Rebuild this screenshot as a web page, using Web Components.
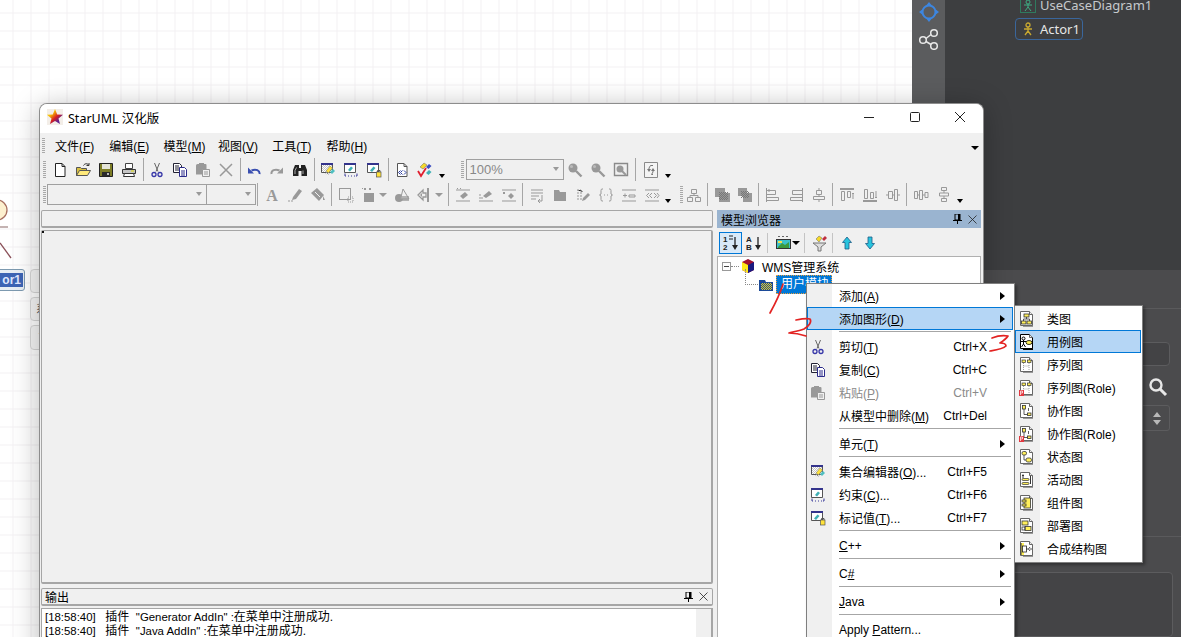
<!DOCTYPE html>
<html lang="zh"><head><meta charset="utf-8"><title>StarUML</title>
<style>
html,body{margin:0;padding:0;width:1181px;height:637px;overflow:hidden;font:12px "Liberation Sans","Noto Sans CJK SC",sans-serif;color:#000}
u{text-underline-offset:1px}
.lat{font-size:11.4px}
</style></head><body>
<x-desktop>
  <x-canvas slot="canvas">
    <x-actor-bit></x-actor-bit>
  </x-canvas>
  <x-sidepanel slot="side"></x-sidepanel>

  <x-window slot="window">
    <x-titlebar>StarUML 汉化版</x-titlebar>
    <x-menubar>
      <span>文件(<u>F</u>)</span><span>编辑(<u>E</u>)</span><span>模型(<u>M</u>)</span><span>视图(<u>V</u>)</span><span>工具(<u>T</u>)</span><span>帮助(<u>H</u>)</span>
    </x-menubar>
    <x-toolbar style="--pl:3px">
      <x-grip></x-grip>
      <x-tool icon="new"></x-tool><x-tool icon="open"></x-tool><x-tool icon="save"></x-tool><x-tool icon="print"></x-tool><x-sep></x-sep>
      <x-tool icon="cut"></x-tool><x-tool icon="copy"></x-tool><x-tool icon="paste"></x-tool><x-tool icon="del"></x-tool><x-sep></x-sep>
      <x-tool icon="undo"></x-tool><x-tool icon="redo"></x-tool><x-tool icon="find"></x-tool><x-sep></x-sep>
      <x-tool icon="coll"></x-tool><x-tool icon="cons"></x-tool><x-tool icon="tag"></x-tool><x-sep></x-sep>
      <x-tool icon="xml"></x-tool><x-tool icon="check"></x-tool><x-caret></x-caret>
      <x-grip style="margin:0 2px 0 12px"></x-grip>
      <x-combo style="width:98px" text="100%"></x-combo>
      <x-tool icon="zin"></x-tool><x-tool icon="zout"></x-tool><x-tool icon="zfit"></x-tool><x-sep></x-sep>
      <x-tool icon="refresh" style="margin-left:2px"></x-tool><x-caret></x-caret>
    </x-toolbar>
    <x-toolbar style="--pl:3px">
      <x-grip style="margin-right:.5px"></x-grip>
      <x-combo style="width:160px"></x-combo><x-combo style="width:50px;margin-left:-1px"></x-combo><x-sep style="width:4.5px"></x-sep>
      <x-tool icon="fA"></x-tool><x-tool icon="pen"></x-tool><x-tool icon="fill"></x-tool><x-sep></x-sep>
      <x-tool icon="sel"></x-tool><x-tool icon="stereo" caret></x-tool><x-tool icon="shapes"></x-tool><x-tool icon="line" caret></x-tool><x-sep></x-sep>
      <x-tool icon="n1"></x-tool><x-tool icon="n2"></x-tool><x-tool icon="n3"></x-tool><x-sep></x-sep>
      <x-tool icon="note"></x-tool><x-tool icon="folder"></x-tool><x-tool icon="sig"></x-tool><x-tool icon="brace"></x-tool><x-tool icon="attr"></x-tool><x-tool icon="op"></x-tool><x-caret></x-caret>
      <x-grip style="margin:0 -1px 0 5px"></x-grip>
      <x-tool icon="hier"></x-tool><x-sep></x-sep>
      <x-tool icon="front"></x-tool><x-tool icon="back"></x-tool><x-sep></x-sep>
      <x-tool icon="al"></x-tool><x-tool icon="ar"></x-tool><x-tool icon="ac"></x-tool><x-sep></x-sep>
      <x-tool icon="at"></x-tool><x-tool icon="ab"></x-tool><x-tool icon="am"></x-tool><x-sep></x-sep>
      <x-tool icon="sh"></x-tool><x-tool icon="sv"></x-tool><x-caret></x-caret>
    </x-toolbar>
    <x-workspace>
      <x-dock-bar slot="tabs"></x-dock-bar>
      <x-doc-area slot="doc"></x-doc-area>
      <x-dock-bar slot="outbar" title="输出" closable></x-dock-bar>
      <x-log slot="log">
        <div><span class="lat">[18:58:40]   </span>插件  <span class="lat">"Generator AddIn" :</span>在菜单中注册成功.</div>
        <div><span class="lat">[18:58:40]   </span>插件  <span class="lat">"Java AddIn" :</span>在菜单中注册成功.</div>
        <div><span class="lat">[18:58:40]   </span>插件  <span class="lat">"C++ AddIn" :</span>在菜单中注册成功.</div>
      </x-log>
      <x-dock-bar slot="browserbar" title="模型浏览器" closable active></x-dock-bar>
      <x-browser-tools slot="browsertools"></x-browser-tools>
      <x-tree slot="tree"></x-tree>
    </x-workspace>
  </x-window>

  <x-menu slot="overlay" style="left:806px;top:283px;width:209px;height:360px;--ipad:3px">
    <x-menu-item arrow>添加(<u>A</u>)</x-menu-item>
    <x-menu-item arrow active>添加图形(<u>D</u>)</x-menu-item>
    <x-menu-sep></x-menu-sep>
    <x-menu-item icon="cut" shortcut="Ctrl+X">剪切(<u>T</u>)</x-menu-item>
    <x-menu-item icon="copy" shortcut="Ctrl+C">复制(<u>C</u>)</x-menu-item>
    <x-menu-item icon="paste" shortcut="Ctrl+V" disabled>粘贴(<u>P</u>)</x-menu-item>
    <x-menu-item shortcut="Ctrl+Del">从模型中删除(<u>M</u>)</x-menu-item>
    <x-menu-sep></x-menu-sep>
    <x-menu-item arrow>单元(<u>T</u>)</x-menu-item>
    <x-menu-sep></x-menu-sep>
    <x-menu-item icon="coll" shortcut="Ctrl+F5">集合编辑器(<u>O</u>)...</x-menu-item>
    <x-menu-item icon="cons" shortcut="Ctrl+F6">约束(<u>C</u>)...</x-menu-item>
    <x-menu-item icon="tag" shortcut="Ctrl+F7">标记值(<u>T</u>)...</x-menu-item>
    <x-menu-sep></x-menu-sep>
    <x-menu-item arrow><u>C</u>++</x-menu-item>
    <x-menu-sep></x-menu-sep>
    <x-menu-item arrow>C<u>#</u></x-menu-item>
    <x-menu-sep></x-menu-sep>
    <x-menu-item arrow><u>J</u>ava</x-menu-item>
    <x-menu-sep></x-menu-sep>
    <x-menu-item>Apply <u>P</u>attern...</x-menu-item>
  </x-menu>

  <x-menu slot="overlay" sub style="left:1014px;top:305px;width:129px;--ipad:1px">
    <x-menu-item icon="dclass">类图</x-menu-item>
    <x-menu-item icon="duse" active>用例图</x-menu-item>
    <x-menu-item icon="dseq">序列图</x-menu-item>
    <x-menu-item icon="dseqr">序列图(Role)</x-menu-item>
    <x-menu-item icon="dcol">协作图</x-menu-item>
    <x-menu-item icon="dcolr">协作图(Role)</x-menu-item>
    <x-menu-item icon="dstate">状态图</x-menu-item>
    <x-menu-item icon="dact">活动图</x-menu-item>
    <x-menu-item icon="dcomp">组件图</x-menu-item>
    <x-menu-item icon="ddep">部署图</x-menu-item>
    <x-menu-item icon="dstruct">合成结构图</x-menu-item>
  </x-menu>

  <x-scribble slot="overlay"></x-scribble>
</x-desktop>

<script>
const G='#999';
const win=(extra)=>`<defs><pattern id="d" width="2" height="2" patternUnits="userSpaceOnUse"><rect width="1" height="1" fill="#888"/><rect x="1" y="1" width="1" height="1" fill="#888"/></pattern></defs><path d="M1.5 1.5h11v9h-11z" fill="#fff" stroke="#555"/><rect x="1" y="1" width="12" height="2" fill="#34348c"/>${extra}`;
const page=(inner,active)=>`<path d="M3 2h10v13H3z" fill="${active?'#000':'#999'}" transform="translate(1 1)"/><path d="M1.5 .5h9l3 3v11h-12z" fill="#fff" stroke="${active?'#000':'#666'}"/><path d="M10.5 .5v3h3" fill="#eee" stroke="#666"/>${inner}`;
const Y='#ffef5a',B='#333';
const ICONS={
 new:`<path d="M3.5 1.5h6.5l3 3v10h-9.5z" fill="#fff" stroke="#222"/><path d="M10 1.5v3h3" fill="none" stroke="#222"/>`,
 open:`<path d="M1.5 13.5v-8h4l1 1h5v7z" fill="#d8c040" stroke="#555"/><path d="M1.5 13.5l3-5h11l-3 5z" fill="#ffe97a" stroke="#555"/><path d="M8.5 3.5c1-2 4-2.5 5-.5m.5-2v2.5h-2.5" stroke="#333" fill="none"/>`,
 save:`<path d="M1.5 1.5h13v13h-13z" fill="#7d7d26" stroke="#222"/><rect x="4" y="2" width="8" height="5" fill="#e4e4d8"/><rect x="4" y="10" width="8" height="4" fill="#2a2a2a"/><rect x="9" y="11" width="2" height="2" fill="#bbb"/>`,
 print:`<path d="M4.5 1.5h7v5h-7z" fill="#fff" stroke="#444"/><path d="M1.5 7.5h13v4h-13z" fill="#c4c4c4" stroke="#333"/><path d="M3.5 11.5h9l1 3h-11z" fill="#fff" stroke="#333"/><path d="M10 9h3" stroke="#dd0"/>`,
 cut:`<path d="M5.5 1l3.5 8.5M10.5 1L7 9.5" stroke="#666" fill="none"/><circle cx="5" cy="12.5" r="2" fill="none" stroke="#3737a8" stroke-width="1.3"/><circle cx="11" cy="12.5" r="2" fill="none" stroke="#3737a8" stroke-width="1.3"/>`,
 copy:`<path d="M1.5 1.5h6l2 2v7h-8z" fill="#fff" stroke="#223"/><path d="M3 4h4M3 6h4M3 8h4" stroke="#223"/><path d="M7.5 5.5h5l2 2v7h-7z" fill="#fff" stroke="#2a2a8a"/><path d="M9 9h4M9 11h4M9 13h4" stroke="#2a2a8a"/>`,
 paste:`<path d="M1 3.5a1.5 1.5 0 0 1 1.5-1.5h1.500v-1h5v1h1.500a1 1 0 0 1 1 1v9.500H1z" fill="${G}"/><path d="M7.500 7.500h7v7h-7z" fill="#f0f0f0" stroke="${G}"/><path d="M9 10h4M9 12h4" stroke="${G}"/>`,
 del:`<path d="M2 2l12 12M14 2L2 14" stroke="${G}" stroke-width="1.500"/>`,
 undo:`<path d="M13.500 12c.5-3.500-3.500-5.500-8-3.500" fill="none" stroke="#3a4fb0" stroke-width="2"/><path d="M2 5.500v6h6z" fill="#3a4fb0"/>`,
 redo:`<path d="M2.500 12c-.5-3.500 3.500-5.500 8-3.500" fill="none" stroke="${G}" stroke-width="2"/><path d="M14 5.500v6h-6z" fill="${G}"/>`,
 find:`<path d="M1 14V8l2-5h4v3h2V3h4l2 5v6H9.500V9h-3v5z" fill="#222"/><path d="M3 12V8.500l1.500-3M11 12V8.500" stroke="#aaa" fill="none"/>`,
 coll:win(`<rect x="2" y="3" width="10" height="7" fill="url(#d)" opacity=".5"/><path d="M5 11l5-6 3 2-5 6z" fill="url(#d)"/><path d="M6 9l4-5 2.500 2-4 5z" fill="#ffe23a" stroke="#777" stroke-width=".5"/><path d="M10 10l3-3 2 2-3 3z" fill="#4fbfc0"/>`),
 cons:win(`<path d="M5 8l3-3.500 2 1.500-3 3.500z" fill="#3fb0b5"/><path d="M2 11.500v2.500h1M14 11.500v2.500h-1M5 14h1M8 14h1M11 14h1" stroke="#3a3a9a" fill="none"/>`),
 tag:win(`<path d="M4 8.500l3.500-4 2 1.500-3.500 4z" fill="#3fb0b5"/><rect x="10.500" y="10" width="4.500" height="5" fill="#ffe23a" stroke="#555" stroke-width=".7"/><path d="M11.500 10V8.500h2.500V10" fill="none" stroke="#555"/>`),
 xml:`<path d="M3.500 1.500h6.500l3 3v10h-9.500z" fill="#fff" stroke="#555"/><path d="M10 1.500v3h3" fill="none" stroke="#555"/><path d="M6.500 8.500l-2 2 2 2M8.500 8.500l-2 2 2 2M10 8.500l2 2-2 2" fill="none" stroke="#2a3ea0"/>`,
 check:`<path d="M7 1l3 2-4 4-3-2z" fill="#f5d828" stroke="#666" stroke-width=".5"/><path d="M12 2l2.500 2-3 3-2.500-2z" fill="#3b4cc0"/><path d="M12 8l2.500 2-3 3-2.500-2z" fill="#3fb0b5"/><path d="M1 9l3 5 5-8" fill="none" stroke="#e02030" stroke-width="1.800"/>`,
 zin:`<circle cx="6" cy="6" r="4.500" fill="${G}"/><circle cx="4.500" cy="4.500" r="1.500" fill="#bbb"/><path d="M9 9l5.500 5.500" stroke="${G}" stroke-width="2.400"/>`,
 zout:`<circle cx="6" cy="6" r="4.500" fill="${G}"/><circle cx="4.500" cy="4.500" r="1.500" fill="#bbb"/><path d="M9 9l5.500 5.500" stroke="${G}" stroke-width="2.400"/>`,
 zfit:`<path d="M1.500 1.500h13v12h-13z" fill="#f0f0f0" stroke="#8a8a8a" stroke-width="1.400"/><circle cx="7" cy="7" r="3.500" fill="${G}"/><path d="M9 9l4 4" stroke="${G}" stroke-width="2"/>`,
 refresh:`<path d="M1.500 .5h13v15h-13z" fill="#f4f4f4" stroke="#8a8a8a"/><path d="M10 3.500H7.500L6 6v2M10 12.500h-1.500L10 10V8" fill="none" stroke="#777"/><path d="M4 7h4L6 10zM8 9h4l-2-3z" fill="#777"/>`,
 fA:`<text x="8" y="14" text-anchor="middle" font-family="Liberation Serif,serif" font-weight="700" font-size="16" fill="${G}">A</text>`,
 pen:`<path d="M6 10l6-8 3 2-6 8-4 1z" fill="${G}"/><path d="M1 14h6" stroke="${G}" stroke-dasharray="2 1"/>`,
 fill:`<path d="M1 6l6-5 7 7-5 6z" fill="${G}"/><path d="M5 5l5 5" stroke="#f0f0f0"/><path d="M13 9l2 4h-2z" fill="${G}"/>`,
 sel:`<rect x="1.500" y="1.500" width="11" height="11" fill="none" stroke="${G}"/><path d="M10 10h5v5h-5z" fill="none" stroke="${G}" stroke-dasharray="1 1"/>`,
 stereo:`<path d="M3 1l2 2M5 1L3 3M8 1l2 2M10 1L8 3M1 1l1 1" stroke="${G}"/><rect x="3" y="6" width="10" height="9" fill="${G}"/>`,
 shapes:`<circle cx="5" cy="11" r="4" fill="${G}"/><path d="M9 2l6 10H6.500z" fill="#f0f0f0" stroke="${G}"/><rect x="7" y="9" width="8" height="5" fill="${G}" opacity=".7"/>`,
 line:`<path d="M11 1v14" stroke="${G}" stroke-width="2"/><path d="M1 8l5-5v3h3v4H6v3z" fill="none" stroke="${G}" stroke-width="1.300"/><path d="M3 8l2-2v4z" fill="${G}"/>`,
 n1:`<path d="M1 3h14M1 14h14" stroke="${G}"/><path d="M2 1l1 1M3 1L2 2M5 1l1 1M6 1L5 2" stroke="${G}"/><path d="M5 9l5-4 3 3-5 4z" fill="${G}"/>`,
 n2:`<path d="M1 14h14M1 11h4M1 8h2" stroke="${G}"/><path d="M5 9l6-5 3 3-6 4z" fill="${G}"/>`,
 n3:`<path d="M1 3h14M1 14h14" stroke="${G}"/><path d="M2 5l2 2M4 5L2 7" stroke="${G}"/><path d="M7 9l3-3 3 3-3 3z" fill="${G}"/>`,
 note:`<path d="M2 3h12M2 6h12M2 9h8M2 12h5" stroke="${G}"/><path d="M13 8v6H9m2-2l-2 2 2 2" fill="none" stroke="${G}"/>`,
 folder:`<path d="M2 3h5l1 2h6v9H2z" fill="${G}"/>`,
 sig:`<path d="M2 3h4l2 2M2 6h6M2 9h5M2 12h6" stroke="${G}" stroke-dasharray="2 1"/><path d="M8 11l5-5 2 2-5 5-3 1z" fill="${G}"/>`,
 brace:`<path d="M5 2H4Q3 2 3 3.500V7L1.500 8 3 9v3.500Q3 14 4 14h1M11 2h1q1 0 1 1.500V7l1.500 1L13 9v3.500q0 1.500-1 1.500h-1" fill="none" stroke="${G}"/><path d="M6 8h1M9 8h1" stroke="${G}"/>`,
 attr:`<path d="M1 3h14M1 14h14" stroke="${G}"/><path d="M2 8.500h4M4 6.500v4M8 8h6v2H8z" stroke="${G}" fill="none"/>`,
 op:`<path d="M1 3h14M1 14h14" stroke="${G}"/><path d="M5 6L2.500 8.500 5 11M8 6L5.500 8.500 8 11M10 6l2.500 2.500L10 11M13 6l2 2.500-2 2.500" stroke="${G}" fill="none"/>`,
 hier:`<path d="M5.500 2.500h5v4h-5zM1.500 10.500h5v4h-5zM9.500 10.500h5v4h-5z" fill="none" stroke="${G}"/><path d="M8 6.500v2M4 10.500v-2h8v2" fill="none" stroke="${G}"/>`,
 front:`<defs><pattern id="d" width="2" height="2" patternUnits="userSpaceOnUse"><rect width="1" height="1" fill="#777"/><rect x="1" y="1" width="1" height="1" fill="#777"/></pattern></defs><rect x="5" y="6" width="11" height="9" fill="${G}"/><rect x="1" y="1" width="10" height="9" fill="${G}"/><rect x="5" y="5" width="9" height="8" fill="url(#d)"/>`,
 back:`<defs><pattern id="d" width="2" height="2" patternUnits="userSpaceOnUse"><rect width="1" height="1" fill="#777"/><rect x="1" y="1" width="1" height="1" fill="#777"/></pattern></defs><rect x="1" y="1" width="9" height="8" fill="${G}"/><rect x="6" y="6" width="9" height="9" fill="${G}"/><rect x="4" y="4" width="8" height="7" fill="url(#d)"/>`,
 al:`<path d="M1.500 1v14" stroke="${G}"/><path d="M1.500 3.500h9v4h-9M1.500 10.500h12v3h-12M4 2v3" fill="none" stroke="${G}"/>`,
 ar:`<path d="M14.500 1v14" stroke="${G}"/><path d="M14.500 3.500h-10v4h10M14.500 10.500h-12v3h12" fill="none" stroke="${G}"/>`,
 ac:`<path d="M8 1v14" stroke="${G}"/><path d="M5.500 3.500h5v4h-5zM2.500 9.500h11v3h-11z" fill="#f0f0f0" stroke="${G}"/>`,
 at:`<path d="M1 2h14" stroke="${G}" stroke-width="2"/><path d="M2.500 4.500h3v9h-3zM8.500 4.500h3v6h-3zM14 12V6m-1 1l1-1 1 1" fill="none" stroke="${G}"/>`,
 ab:`<path d="M1 14h14" stroke="${G}" stroke-width="2"/><path d="M2.500 2.500h3v9h-3zM8.500 5.500h3v6h-3zM14 4v7m-1-1l1 1 1-1" fill="none" stroke="${G}"/>`,
 am:`<path d="M1 8h14" stroke="${G}"/><path d="M3.500 4.500h4v7h-4zM9.500 2.500h3v11h-3z" fill="#f0f0f0" stroke="${G}"/>`,
 sh:`<path d="M1.500 4.500h3v7h-3zM6.500 3.500h3v9h-3zM12 5.500h3v5h-3zM4.500 8h2M9.500 8h2.500" fill="#f0f0f0" stroke="${G}"/>`,
 sv:`<path d="M5.500 .5h5v3h-5zM3.500 6h9v3h-9zM5.500 11.500h5v3h-5zM8 3.500V6M8 9v2.500" fill="#f0f0f0" stroke="${G}"/>`,
 sort12:`<text x="0" y="7" font-family="Liberation Sans" font-weight="700" font-size="8" fill="#222">1</text><text x="0" y="15" font-family="Liberation Sans" font-weight="700" font-size="8" fill="#222">2</text><path d="M6 1h4M6 4h4" stroke="#222"/><path d="M12 2v11" stroke="#222" stroke-width="1.300"/><path d="M9 10h6l-3 5z" fill="#222"/>`,
 sortab:`<text x="0" y="7" font-family="Liberation Sans" font-weight="700" font-size="8" fill="#222">A</text><text x="0" y="15" font-family="Liberation Sans" font-weight="700" font-size="8" fill="#222">B</text><path d="M12 2v11" stroke="#222" stroke-width="1.300"/><path d="M9 10h6l-3 5z" fill="#222"/>`,
 filt:`<path d="M3 1l1 1M5 1L4 2M7 1l1 1M9 1L8 2M11 1l1 1M13 1l-1 1" stroke="#666"/><rect x="1.500" y="4.500" width="14" height="9" fill="#3cc0c8" stroke="#333"/><path d="M3 12l4-4 3 2 4-3v6H3z" fill="#3c9a3c"/><rect x="3" y="6" width="4" height="2" fill="#f5e050"/>`,
 funnel:`<path d="M1 8h13l-5 4v4H6v-4z" fill="#ddd" stroke="#777"/><path d="M4 4l3-3 3 2-3 4z" fill="#f5d828" stroke="#666" stroke-width=".5"/><path d="M10 4l3-3 2 2-3 3z" fill="#c03040"/>`,
 up:`<path d="M8 2l4.500 5.500H10V14H6V7.500H3.500z" fill="#28c4de" stroke="#1c5a86" stroke-width=".8"/>`,
 down:`<path d="M8 14l4.500-5.500H10V2H6v6.500H3.500z" fill="#28c4de" stroke="#1c5a86" stroke-width=".8"/>`,
 cube:`<path d="M8 1l6 3v8l-6 3-6-3V4z" fill="#a01030"/><path d="M2 4l6 3v8l-6-3z" fill="#ffe818"/><path d="M14 4L8 7v8l6-3z" fill="#1a1a80"/>`,
 pkg:`<defs><pattern id="d" width="2" height="2" patternUnits="userSpaceOnUse"><rect width="1" height="1" fill="#e8d020"/><rect x="1" y="1" width="1" height="1" fill="#e8d020"/></pattern></defs><path d="M1 3h6l1 2h7v9H1z" fill="#1c4a98"/><rect x="3" y="6" width="11" height="7" fill="url(#d)"/>`,
 star:`<defs><linearGradient id="s" x1="0" y1="0" x2="1" y2="1"><stop offset=".3" stop-color="#f6c000"/><stop offset=".55" stop-color="#d82020"/><stop offset=".75" stop-color="#602090"/></linearGradient></defs><rect width="16" height="16" fill="#f3eee8"/><path d="M8 0l2.200 5.400 5.800.3-4.500 3.700 1.500 5.600L8 11.900 3 15l1.500-5.600L0 5.700l5.800-.3z" fill="url(#s)"/>`,
 dclass:page(`<rect x="5" y="3" width="5" height="3" fill="${Y}" stroke="${B}" stroke-width=".8"/><rect x="2.500" y="10" width="4.500" height="3" fill="${Y}" stroke="${B}" stroke-width=".8"/><rect x="8" y="10" width="4.500" height="3" fill="${Y}" stroke="${B}" stroke-width=".8"/><path d="M7.500 6v2M4.500 10V8h6v2" fill="none" stroke="${B}" stroke-width=".8"/>`),
 duse:page(`<circle cx="4.500" cy="4.500" r="1.500" fill="none" stroke="#000"/><path d="M4.500 6v4M2 7.500h5M4.500 10L2.500 13M4.500 10l2 3" stroke="#000" fill="none"/><ellipse cx="10" cy="8.500" rx="3" ry="2" fill="${Y}" stroke="#000" stroke-width=".8"/>`,true),
 dseq:page(`<rect x="3" y="3" width="3.500" height="2.500" fill="${Y}" stroke="${B}" stroke-width=".7"/><rect x="8.500" y="3" width="3.500" height="2.500" fill="${Y}" stroke="${B}" stroke-width=".7"/><path d="M4.500 6v7M10 6v7M4.500 9H10" stroke="#888" stroke-width=".8" stroke-dasharray="1 1"/>`),
 dseqr:page(`<rect x="3" y="3" width="3.500" height="2.500" fill="${Y}" stroke="${B}" stroke-width=".7"/><rect x="8.500" y="3" width="3.500" height="2.500" fill="${Y}" stroke="${B}" stroke-width=".7"/><path d="M4.500 6v4M10 6v7M4.500 9H10" stroke="#888" stroke-width=".8" stroke-dasharray="1 1"/><rect x="0" y="10" width="5" height="6" fill="#e03840"/><path d="M1.500 15v-4h2v2h-2" fill="none" stroke="#fff" stroke-width=".7"/>`),
 dcol:page(`<rect x="3.500" y="2.500" width="3" height="3.500" fill="${Y}" stroke="${B}" stroke-width=".8"/><rect x="8.500" y="10" width="3.500" height="2.500" fill="${Y}" stroke="${B}" stroke-width=".8"/><path d="M5 6v5.500h3.500M9.500 5v3" fill="none" stroke="${B}" stroke-width=".8"/>`),
 dcolr:page(`<rect x="3.500" y="2.500" width="3" height="3.500" fill="${Y}" stroke="${B}" stroke-width=".8"/><rect x="8.500" y="10" width="3.500" height="2.500" fill="${Y}" stroke="${B}" stroke-width=".8"/><path d="M5 6v5.500h3.500M9.500 5v3" fill="none" stroke="${B}" stroke-width=".8"/><rect x="0" y="10" width="5" height="6" fill="#e03840"/><path d="M1.500 15v-4h2v2h-2" fill="none" stroke="#fff" stroke-width=".7"/>`),
 dstate:page(`<rect x="3" y="2.500" width="4.500" height="3.500" rx="1.500" fill="${Y}" stroke="${B}" stroke-width=".8"/><rect x="7" y="9" width="5.500" height="4" rx="1.800" fill="${Y}" stroke="${B}" stroke-width=".8"/><path d="M5 6v5h2" fill="none" stroke="${B}" stroke-width=".8"/>`),
 dact:page(`<circle cx="4" cy="3.500" r="1" fill="#222"/><path d="M4 4.500V6" stroke="${B}"/><rect x="3" y="6.500" width="7" height="2" rx="1" fill="${Y}" stroke="${B}" stroke-width=".7"/><rect x="3" y="10.500" width="7" height="2" rx="1" fill="${Y}" stroke="${B}" stroke-width=".7"/><path d="M11.500 4v8" stroke="${B}"/>`),
 dcomp:page(`<rect x="5" y="3" width="6.500" height="10" fill="${Y}" stroke="${B}" stroke-width=".8"/><rect x="3" y="5" width="4" height="2" fill="${Y}" stroke="${B}" stroke-width=".8"/><rect x="3" y="9" width="4" height="2" fill="${Y}" stroke="${B}" stroke-width=".8"/>`),
 ddep:page(`<rect x="3" y="3" width="6" height="4" fill="${Y}" stroke="${B}" stroke-width=".8"/><rect x="6" y="8.500" width="6" height="4" fill="${Y}" stroke="${B}" stroke-width=".8"/><rect x="3" y="9" width="3" height="3" fill="none" stroke="${B}" stroke-width=".8"/>`),
 dstruct:page(`<rect x="2" y="2" width="3" height="12" fill="${Y}"/><path d="M2 2v12" stroke="${B}"/><rect x="3.500" y="5" width="4" height="6" fill="#fff" stroke="#222" stroke-width=".8"/><path d="M7.500 8h2M11 6l-1.500 2 1.500 2M13 8h-2" stroke="#222" fill="none" stroke-width=".8"/>`),
};
function el(name,css,html){
  customElements.define(name,class extends HTMLElement{
    connectedCallback(){
      if(this.shadowRoot)return;
      const s=this.attachShadow({mode:'open'});
      s.innerHTML=`<style>${css}</style>${typeof html==='function'?html(this):html}`;
    }
  });
}
el('x-icon',':host{display:inline-flex;width:16px;height:16px;flex:none}svg{display:block;overflow:visible}',
  h=>`<svg viewBox="0 0 16 16" width="16" height="16" aria-hidden="true">${ICONS[h.getAttribute('name')]||''}</svg>`);

el('x-desktop',`:host{display:block;position:relative;width:1181px;height:637px;overflow:hidden}
  .base{display:flex;height:100%}
  .l{flex:1;min-width:0;display:flex}.r{width:269px;display:flex}`,
  `<div class="base"><div class="l"><slot name="canvas"></slot></div><div class="r"><slot name="side"></slot></div></div><slot name="window"></slot><slot name="overlay"></slot>`);

el('x-canvas',`:host{display:block;flex:1;position:relative;overflow:hidden;background-color:#fff;
  background-image:linear-gradient(#f2f0f3 1px,transparent 1px),linear-gradient(90deg,#f2f0f3 1px,transparent 1px);
  background-size:18px 18px;background-position:12.500px 12.500px}`,`<slot></slot>`);

el('x-actor-bit',`:host{display:block;position:absolute;left:0;top:195px;width:40px;height:160px}
  svg{position:absolute;left:0;top:0}
  .label{position:absolute;left:-6px;top:74px;width:29px;height:20px;border:1px solid #7d9ab0;border-radius:3px;background:#e8eef3;display:flex;align-items:center;box-sizing:content-box;
    font:700 12px "Liberation Sans",sans-serif}
  .label span{background:#3d64b4;color:#dfe6ff;padding:0 2px 0 6px;line-height:14px;width:20px;text-align:right}
  .chip{position:absolute;left:30px;width:14px;box-sizing:border-box;border:1px solid #d6d6d6;border-radius:4px;background:#f6f6f6;overflow:hidden;font:11px "Noto Sans","Noto Sans CJK SC",sans-serif;color:#555;padding-left:5px}`,
  `<svg width="40" height="70" aria-hidden="true"><circle cx="-3" cy="15" r="10" fill="#fdf0cf" stroke="#a87060" stroke-width="1.300"/><path d="M0 32h8" stroke="#b09a98" stroke-width="1.500"/><path d="M0 48l11 15" stroke="#8a5058" stroke-width="1.300"/></svg>
   <div class="label"><span>or1</span></div>
   <div class="chip" style="top:74px;height:24px"></div>
   <div class="chip" style="top:102px;height:24px;line-height:22px">系</div>
   <div class="chip" style="top:130px;height:25px;line-height:20px">丶</div>`);

el('x-sidepanel',`:host{display:flex;flex:1;font-family:"Noto Sans",sans-serif;color:#d8d8da}
  .rail{width:33px;background:#5b5c5e;display:flex;flex-direction:column;align-items:center;padding-top:1px;gap:5px;height:270px;box-sizing:border-box}
  .main{flex:1;display:flex;flex-direction:column;background:#4b4b4d;min-width:0}
  .top{height:270px;background:#3d3e40;position:relative;flex:1}
  .row{position:absolute;left:75px;top:-3px;display:flex;align-items:center;gap:4px;font-size:13px;line-height:16px;color:#c6c9cc}
  .chip{position:absolute;left:70px;top:18px;height:22px;width:68px;box-sizing:border-box;border:1px solid #3a669c;border-radius:4px;display:flex;align-items:center;gap:6px;padding-left:6px;font-size:13px;color:#e6e6e6}
  .bx{width:16px;height:16px;border:1px solid #2f7a5e;box-sizing:border-box;display:flex}
  .form{flex:1;position:relative}
  .l1{position:absolute;left:0;right:0;top:38px;border-top:1px solid #5a5a5c}
  .inp{position:absolute;right:11px;top:72px;width:60px;height:24px;box-sizing:border-box;border:1px solid #5c5c5e;border-radius:4px;background:#434345}
  .sel{position:absolute;right:11px;top:135px;width:60px;height:26px;box-sizing:border-box;border:1px solid #5c5c5e;border-radius:3px}
  .sel svg{position:absolute;right:3px;top:3px}
  .srch{position:absolute;right:12px;top:106px}
  .l2{position:absolute;left:0;right:0;top:266px;border-top:1px solid #5a5a5c}
  .box{position:absolute;left:0;right:8px;top:302px;bottom:0;border:1px solid #5c5c5e;border-radius:4px;background:#444446}`,
  `<div style="flex:1;flex-direction:column;display:flex"><div style="display:flex;height:270px">
     <div class="rail">
      <svg width="22" height="22" viewBox="0 0 22 22" aria-hidden="true"><circle cx="11" cy="11" r="6.500" fill="none" stroke="#3d86e0" stroke-width="2"/><path d="M11 1l2.600 3.200h-5.200zM11 21l2.600-3.200h-5.200zM1 11l3.200-2.600v5.200zM21 11l-3.200-2.600v5.200z" fill="#3d86e0"/></svg>
      <svg width="22" height="22" viewBox="0 0 22 22" aria-hidden="true"><g fill="none" stroke="#e8e8e8" stroke-width="1.500"><circle cx="16" cy="5" r="3.300"/><circle cx="5" cy="12" r="3.300"/><circle cx="16" cy="18" r="3.300"/><path d="M8 10.500l5-4M8 13.500l5 3"/></g></svg>
     </div>
     <div class="top">
       <div class="row"><span class="bx"><svg width="14" height="14" viewBox="0 0 14 14" aria-hidden="true"><circle cx="7" cy="4" r="2" fill="none" stroke="#3fae84"/><path d="M7 6v3M3 7h8M7 9l-3 4M7 9l3 4" stroke="#3fae84"/></svg></span>UseCaseDiagram1</div>
       <div class="chip"><svg width="12" height="14" viewBox="0 0 12 14" aria-hidden="true"><circle cx="6" cy="3" r="2" fill="none" stroke="#c8a830" stroke-width="1.300"/><path d="M6 5v4M2 7h8M6 9l-3 4M6 9l3 4" stroke="#c8a830" stroke-width="1.300"/></svg>Actor1</div>
     </div></div>
     <div class="main">
      <div class="form">
       <div class="l1"></div><div class="inp"></div>
       <svg class="srch" width="22" height="22" viewBox="0 0 22 22" aria-hidden="true"><circle cx="9" cy="9" r="5.500" fill="none" stroke="#e8e8e8" stroke-width="2.400"/><path d="M13 13l6 6" stroke="#e8e8e8" stroke-width="3"/></svg>
       <div class="sel"><svg width="18" height="18" viewBox="0 0 18 18" aria-hidden="true"><path d="M9 3l4 5H5zM9 16l4-5H5z" fill="#b8b8b8"/></svg></div>
       <div class="l2"></div><div class="box"></div>
      </div>
     </div></div>`);

el('x-window',`:host{display:flex;flex-direction:column;position:absolute;left:39px;top:103px;width:945px;height:560px;box-sizing:border-box;background:#f0f0f0;
   border:1px solid #8d8d8d;border-bottom:0;border-radius:8px 8px 0 0;box-shadow:0 4px 28px rgba(0,0,0,.28);overflow:hidden}`,`<slot></slot>`);

el('x-titlebar',`:host{display:flex;align-items:center;height:29px;box-sizing:border-box;padding:0 0 3px 7px;background:#fff;flex:none;font:12.500px "Noto Sans","Noto Sans CJK SC",sans-serif}
  .t{flex:1;margin-left:5px}
  .c{display:flex;width:119px;justify-content:space-between;padding-right:18px;box-sizing:border-box;align-items:center;flex:none}
  svg{display:block}`,
  `<x-icon name="star"></x-icon><span class="t"><slot></slot></span>
   <div class="c">
    <svg width="10" height="10" aria-hidden="true"><path d="M0 5.500h10" stroke="#222"/></svg>
    <svg width="10" height="10" aria-hidden="true"><rect x=".5" y=".5" width="9" height="9" fill="none" stroke="#222" rx="1"/></svg>
    <svg width="10" height="10" aria-hidden="true"><path d="M0 0l10 10M10 0L0 10" stroke="#222"/></svg>
   </div>`);

el('x-menubar',`:host{display:flex;align-items:center;height:24px;padding-left:2px;position:relative;flex:none}
  .g{width:3px;height:15px;background:repeating-linear-gradient(#aaa 0 1px,transparent 1px 2px);margin-right:10px}
  ::slotted(span){width:54.300px;flex:none}
  .end{position:absolute;right:4px;top:13px;width:0;height:0;border:4px solid transparent;border-top-color:#000;border-bottom:0}`,
  `<div class="g"></div><slot></slot><div class="end"></div>`);

el('x-grip',`:host{display:block;width:3px;height:17px;flex:none;margin-right:2.500px;background:repeating-linear-gradient(#a8a8a8 0 1px,transparent 1px 2px)}`,``);

el('x-toolbar',`:host{display:flex;align-items:center;height:25px;padding-left:var(--pl,3px);flex:none;background:#f0f0f0}`,`<slot></slot>`);

el('x-tool',`:host{display:inline-flex;align-items:center;justify-content:center;flex:none;height:22px;width:23px;box-sizing:border-box;position:relative}
  :host([caret]){width:33px;justify-content:flex-start;padding-left:3.500px}
  :host([active]){border:1px solid #0078d7;background:#d8e9f8}
  .c{position:absolute;right:3px;top:9px;width:0;height:0;border:4px solid transparent;border-top-color:var(--cc,${G});border-bottom:0}`,
  h=>`<x-icon name="${h.getAttribute('icon')}"></x-icon>${h.hasAttribute('caret')?'<span class="c"></span>':''}`);

el('x-caret',`:host{display:block;width:12px;height:22px;flex:none;position:relative}
  i{position:absolute;left:2px;bottom:3px;width:0;height:0;border:3.500px solid transparent;border-top:4px solid #000;border-bottom:0}`,`<i></i>`);

el('x-sep',`:host{display:flex;justify-content:center;width:5px;height:23px;flex:none}
  i{width:1px;background:#a6a6a6;height:100%}`,`<i></i>`);

el('x-combo',`:host{display:flex;align-items:center;box-sizing:border-box;height:21px;flex:none;border:1px solid #a0a0a0;background:#f0f0f0;color:#888;padding-left:3px;font:13px "Liberation Sans",sans-serif;position:relative}
  i{position:absolute;right:4px;top:7px;width:0;height:0;border:3.500px solid transparent;border-top:4px solid #999;border-bottom:0}`,
  h=>`<span>${h.getAttribute('text')||''}</span><i></i>`);

el('x-workspace',`:host{display:grid;grid-template-columns:672px 264px;column-gap:4px;grid-template-rows:18px 2px 354px 4px 18px 2px 1fr;padding:3px 0 0 1px;flex:1;min-height:0}
  .a{grid-column:1;grid-row:1}.b{grid-column:1;grid-row:3}.c{grid-column:1;grid-row:5}.d{grid-column:1;grid-row:7;min-height:0}
  .e{grid-column:2;grid-row:1}.f{grid-column:2;grid-row:2/8;display:flex;flex-direction:column;min-height:0;padding-top:4px}
  .tree{flex:1;min-height:0;display:flex;margin-top:2px}`,
  `<div class="a"><slot name="tabs"></slot></div><div class="b"><slot name="doc"></slot></div><div class="c"><slot name="outbar"></slot></div><div class="d"><slot name="log"></slot></div>
   <div class="e"><slot name="browserbar"></slot></div>
   <div class="f"><slot name="browsertools"></slot><div class="tree"><slot name="tree"></slot></div></div>`);

el('x-dock-bar',`:host{display:flex;align-items:center;height:18px;box-sizing:border-box;border:1px solid #a6a6a6;border-bottom-width:2px;border-radius:2px;background:#f0f0f0;padding-left:3px;font-size:12px}
  :host([active]){background:#9ab4d0;border:0;border-radius:0;padding-left:4px}
  .t{flex:1}.b{display:flex;gap:6px;align-items:center;padding-right:4px}svg{display:block}`,
  h=>`<span class="t">${h.getAttribute('title')||''}</span>${h.hasAttribute('closable')?`<span class="b">
     <svg width="9" height="10" aria-hidden="true"><path d="M2 0h5v6H2zM0 6.500h9M4.500 7v3" fill="none" stroke="#000"/><rect x="5" y="0" width="2" height="6"/></svg>
     <svg width="9" height="9" aria-hidden="true"><path d="M.5.5l8 8M8.500.5l-8 8" stroke="#222" stroke-width=".8"/></svg></span>`:''}`);

el('x-doc-area',`:host{display:block;height:354px;box-sizing:border-box;border:1px solid #a6a6a6;border-bottom-width:2px;border-right-width:2px;border-radius:2px;background:#f0f0f0;position:relative}
  i{position:absolute;left:0;top:0;width:2px;height:2px;background:#111}`,`<i></i>`);

el('x-log',`:host{display:block;height:100%;box-sizing:border-box;border:1px solid #a6a6a6;border-right-width:2px;background:#f0f0f0;overflow:hidden}
  .w{background:#fff;width:654px;height:100%;padding:1px 0 0 3px;box-sizing:border-box;font-size:12px;line-height:14px}
  ::slotted(div){white-space:pre}`,`<div class="w"><slot></slot></div>`);

el('x-browser-tools',`:host{display:flex;align-items:center;height:22px;padding-left:2px;flex:none}
  .s{width:1px;height:20px;background:#c4c4c4;flex:none}`,
  `<x-tool icon="sort12" active></x-tool><x-tool icon="sortab"></x-tool><span class="s" style="margin:0 3px 0 2px"></span>
   <x-tool icon="filt" caret style="--cc:#000;width:32px"></x-tool><span class="s" style="margin:0 3px 0 1px"></span><x-tool icon="funnel"></x-tool><span class="s" style="margin:0 2px 0 1px"></span><x-tool icon="up"></x-tool><x-tool icon="down"></x-tool>`);

el('x-tree',`:host{display:block;flex:1;background:#fff;border:1px solid #b0b0b0;box-sizing:border-box;position:relative;font-size:12px}
  .r1{position:relative;height:18px;display:flex;align-items:center;padding-left:4px}
  .exp{width:9px;height:9px;border:1px solid #999;box-sizing:border-box;position:relative;background:#fff;margin-right:9px}
  .exp::after{content:"";position:absolute;left:1px;right:1px;top:3px;height:1px;background:#444}
  .dash{position:absolute;left:13px;top:9px;width:8px;border-top:1px dotted #888}
  .name{margin-left:6px}
  .r2{display:flex;align-items:center;height:19px;padding-left:40px;position:relative}
  .v{position:absolute;left:27px;top:-6px;height:15px;width:12px;border-left:1px dotted #888;border-bottom:1px dotted #888}
  .sel{margin-left:2px;background:#0078d7;color:#fff;outline:1px dotted #e8a040;outline-offset:-1px;padding:0 0 0 5px;height:19px;line-height:19px;width:51px;font-size:12px}`,
  `<div class="r1"><span class="exp"></span><span class="dash"></span><x-icon name="cube"></x-icon><span class="name">WMS管理系统</span></div>
   <div class="r2"><span class="v"></span><x-icon name="pkg"></x-icon><span class="sel">用户模块</span></div>`);

el('x-menu',`:host{display:block;position:absolute;box-sizing:border-box;background:#fff;border:1px solid #7f7f7f;box-shadow:2px 2px 3px rgba(0,0,0,.35);padding:0 0 2px 0;overflow:hidden;--gutter:25px}
  :host([sub]){padding-top:1px}
  .g{position:absolute;left:0;top:0;bottom:0;width:var(--gutter);background:#f0f0f0}
  .w{position:relative}`,`<div class="g"></div><div class="w"><slot></slot></div>`);

el('x-menu-item',`:host{display:grid;grid-template-columns:25px 1fr auto 26px;align-items:center;height:23px;box-sizing:border-box;position:relative;margin:0 1px 0 0;font-size:12px}
  :host([active]){background:#b5d6f5;outline:1px solid #0078d7;outline-offset:-1px}
  :host([disabled]){color:#8a8a8a}
  .i{display:flex;justify-content:center;padding-right:var(--ipad,1px)}
  .l{padding-left:7px;white-space:nowrap}
  .s{white-space:nowrap}
  .a{width:0;height:0;border:4px solid transparent;border-left:5px solid #000;border-right:0;margin-left:4px}`,
  h=>{const ic=h.getAttribute('icon'),sc=h.getAttribute('shortcut');
    return `<span class="i">${ic?`<x-icon name="${ic}"></x-icon>`:''}</span><span class="l"><slot></slot></span><span class="s">${sc||''}</span><span>${h.hasAttribute('arrow')?'<span style="display:flex;justify-content:center"><i class="a"></i></span>':''}</span>`});

el('x-menu-sep',`:host{display:block;height:5px;position:relative}
  i{position:absolute;left:32px;right:3px;top:1px;border-top:1px solid #a6a6a6}`,`<i></i>`);

el('x-scribble',`:host{display:block;position:absolute;left:0;top:0;width:1181px;height:637px;pointer-events:none}`,
  `<svg width="1181" height="637" aria-hidden="true"><g fill="none" stroke="#e32322" stroke-width="1.700" stroke-linecap="round" stroke-linejoin="round">
    <path d="M783 284c-3 10-8 20-13 29"/>
    <path d="M796 320c5-1 11-2 14-1 2 3-1 7-6 10-5 2-11 3-15 4 5 0 11 1 17 3"/>
    <path d="M992 338c5-2 11-3 16-2-2 3-5 5-8 7 3 0 6 1 6 3-3 3-10 4-16 5"/>
   </g></svg>`);
</script>
</body></html>
